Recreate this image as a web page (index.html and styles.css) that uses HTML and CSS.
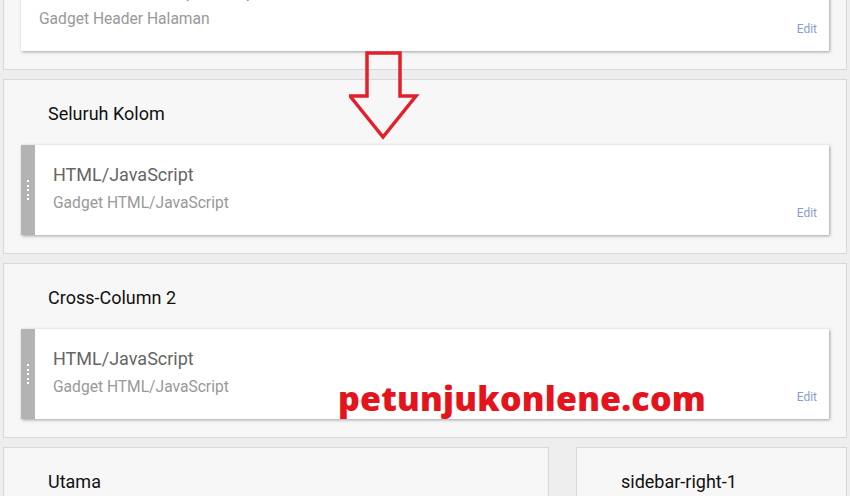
FILE: index.html
```html
<!DOCTYPE html>
<html lang="id">
<head>
<meta charset="utf-8">
<title>Tata Letak</title>
<link rel="stylesheet" href="styles.css">
</head>
<body>
<div class="page">
  <section class="area area-first">
    <h2 class="area-title">Header Halaman</h2>
    <div class="gadget gadget-plain">
      <div class="gadget-body">
        <div class="gadget-text">
          <div class="gadget-name">Catatan Harianku (Header)</div>
          <div class="gadget-type">Gadget Header Halaman</div>
        </div>
        <a class="edit">Edit</a>
      </div>
    </div>
  </section>

  <section class="area">
    <h2 class="area-title">Seluruh Kolom</h2>
    <div class="gadget">
      <div class="handle"><span></span><span></span><span></span><span></span><span></span></div>
      <div class="gadget-body">
        <div class="gadget-text">
          <div class="gadget-name">HTML/JavaScript</div>
          <div class="gadget-type">Gadget HTML/JavaScript</div>
        </div>
        <a class="edit">Edit</a>
      </div>
    </div>
  </section>

  <section class="area">
    <h2 class="area-title">Cross-Column 2</h2>
    <div class="gadget">
      <div class="handle"><span></span><span></span><span></span><span></span><span></span></div>
      <div class="gadget-body">
        <div class="gadget-text">
          <div class="gadget-name">HTML/JavaScript</div>
          <div class="gadget-type">Gadget HTML/JavaScript</div>
        </div>
        <a class="edit">Edit</a>
      </div>
    </div>
  </section>

  <div class="columns">
    <section class="area">
      <h2 class="area-title">Utama</h2>
    </section>
    <section class="area">
      <h2 class="area-title">sidebar-right-1</h2>
    </section>
  </div>
</div>

<svg class="arrow" width="80" height="100" viewBox="0 0 80 100" aria-hidden="true">
  <polygon points="18,3 51,3 51,46 67,46 34,87 1,46 18,46" fill="none" stroke="#e3202a" stroke-width="3.5" stroke-linejoin="miter"/>
</svg>
<div class="watermark">petunjukonlene.com</div>
</body>
</html>
```

FILE: styles.css
```css
* { box-sizing: border-box; }

html, body {
  margin: 0;
  padding: 0;
}

body {
  background: #eeeeee;
  font-family: Roboto, "Liberation Sans", Arial, sans-serif;
  width: 850px;
  height: 496px;
  overflow: hidden;
  position: relative;
}

.page {
  display: flex;
  flex-direction: column;
  gap: 9px;
  padding: 0 3px;
}

.area {
  background: #f7f7f7;
  border: 1px solid #d9d9d9;
  padding: 24px 17px 18px 17px;
  min-height: 175px;
}

.area-first {
  margin-top: -105px;
}

.area-title {
  margin: 0 0 21px 27px;
  font-size: 18px;
  line-height: 20px;
  font-weight: 400;
  color: #111;
}

.gadget {
  display: flex;
  height: 90px;
  background: #fff;
  box-shadow: 1px 1px 3px rgba(0, 0, 0, 0.35);
}

.handle {
  width: 14px;
  flex: none;
  background: #b3b3b3;
  display: flex;
  flex-direction: column;
  align-items: center;
  justify-content: center;
  gap: 2.5px;
}

.handle span {
  width: 2px;
  height: 2px;
  background: #fff;
}

.gadget-body {
  flex: 1;
  display: flex;
  justify-content: space-between;
  padding: 20px 12px 15px 18px;
}

.gadget-name {
  font-size: 18px;
  line-height: 20px;
  color: #666;
  white-space: nowrap;
}

.gadget-type {
  margin-top: 8px;
  font-size: 15.6px;
  line-height: 20px;
  color: #999;
}

.edit {
  align-self: flex-end;
  font-size: 12px;
  line-height: 14px;
  color: #8a9dc6;
}

.columns {
  display: grid;
  grid-template-columns: 1fr 271px;
  gap: 27px;
}

.arrow {
  position: absolute;
  left: 349px;
  top: 50px;
}

.watermark {
  position: absolute;
  left: 338px;
  top: 375px;
  font-family: "Open Sans", sans-serif;
  font-weight: 800;
  font-size: 34px;
  line-height: 46px;
  color: #e3141c;
  letter-spacing: 0.2px;
}
```
